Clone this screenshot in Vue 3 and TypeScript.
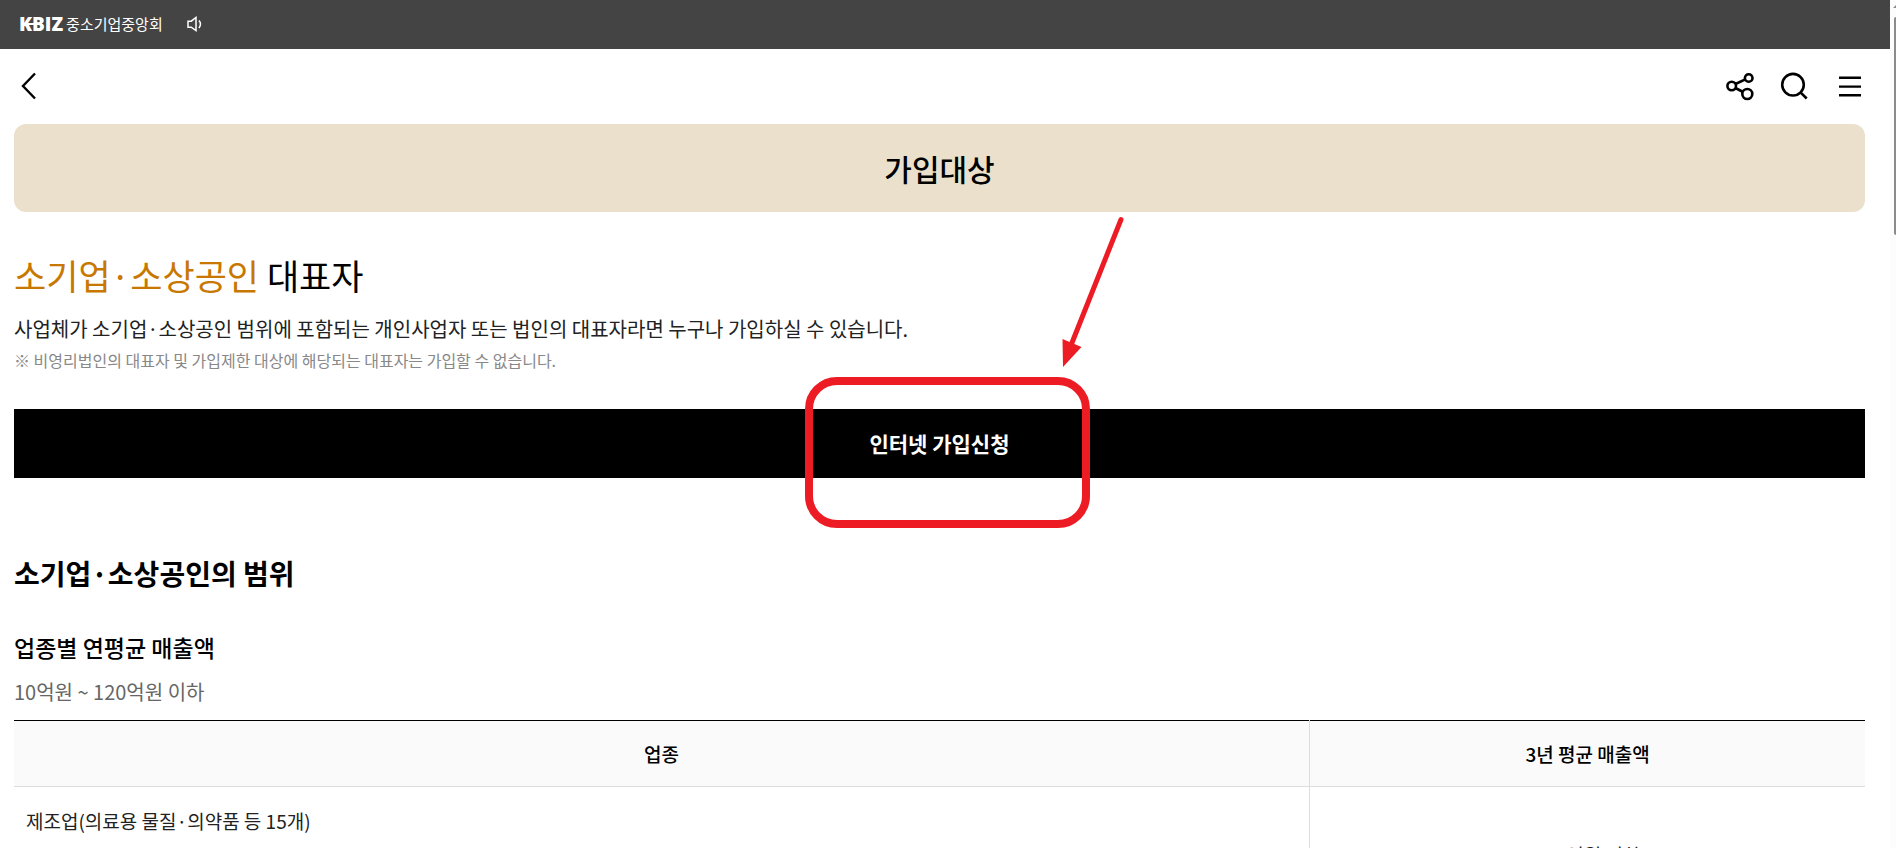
<script setup lang="ts">
interface SalesRow {
  industry: string
  limit: string
}

const columns: string[] = ['업종', '3년 평균 매출액']
const rows: SalesRow[] = [{ industry: '제조업(의료용 물질·의약품 등 15개)', limit: '120억원 이하' }]
</script>

<template>
  <div class="page">
    <div class="content">
      <div class="topbar">
        <a class="brand" href="#">
          <span class="brand-mark">KBIZ</span>
          <span class="brand-name">중소기업중앙회</span>
        </a>
        <button class="icon-button sound" type="button" aria-label="음성 안내">
          <svg width="16" height="16" viewBox="0 0 16 16" fill="none" stroke="#fff" stroke-width="1.500">
            <path d="M1 5.200v6h3.200L9 14.500V1.500L4.200 5.200z" />
            <path d="M12 4.500q3 3.500 0 7.500" />
          </svg>
        </button>
      </div>

      <header class="header">
        <button class="icon-button" type="button" aria-label="뒤로">
          <svg width="32" height="32" viewBox="0 0 32 32" fill="none" stroke="#000" stroke-width="2.400">
            <path d="M23 3.500L11 16l12 12.500" />
          </svg>
        </button>
        <div class="tools">
          <button class="icon-button" type="button" aria-label="공유">
            <svg width="32" height="32" viewBox="0 0 32 32" fill="none" stroke="#000" stroke-width="2.600">
              <circle cx="9.700" cy="16" r="4.300" />
              <circle cx="26.700" cy="8" r="3.800" />
              <circle cx="25.300" cy="24" r="5" />
              <path d="M13.500 14l9.800-4.600M13.500 18l7.500 4" />
            </svg>
          </button>
          <button class="icon-button" type="button" aria-label="검색">
            <svg width="32" height="32" viewBox="0 0 32 32" fill="none" stroke="#000" stroke-width="2.600">
              <circle cx="15" cy="14.700" r="10.800" />
              <path d="M22.500 22.300l6.200 6.200" />
            </svg>
          </button>
          <button class="icon-button" type="button" aria-label="메뉴">
            <svg width="32" height="32" viewBox="0 0 32 32" fill="none" stroke="#000" stroke-width="2.400">
              <path d="M5 7.700h22M5 16.600h22M5 25.300h22" />
            </svg>
          </button>
        </div>
      </header>

      <main class="main">
        <h1 class="banner">가입대상</h1>

        <section class="intro">
          <h2 class="lead"><em>소기업·소상공인</em> 대표자</h2>
          <p class="desc">사업체가 소기업·소상공인 범위에 포함되는 개인사업자 또는 법인의 대표자라면 누구나 가입하실 수 있습니다.</p>
          <p class="note">※ 비영리법인의 대표자 및 가입제한 대상에 해당되는 대표자는 가입할 수 없습니다.</p>
        </section>

        <div class="apply">
          <button class="apply-button" type="button">인터넷 가입신청</button>
          <svg class="callout" width="326" height="316" viewBox="0 0 326 316" aria-hidden="true">
            <rect x="10" y="166" width="277" height="143" rx="28" fill="none" stroke="#ed1c24" stroke-width="8" />
            <path d="M322 4.500L272.500 129" fill="none" stroke="#ed1c24" stroke-width="5" stroke-linecap="round" />
            <path d="M263.500 124L282.500 132L264 152z" fill="#ed1c24" />
          </svg>
        </div>

        <section class="range">
          <h2 class="range-title">소기업·소상공인의 범위</h2>
          <h3 class="range-subtitle">업종별 연평균 매출액</h3>
          <p class="range-value">10억원 ~ 120억원 이하</p>
          <table class="table">
            <colgroup>
              <col class="col-industry" />
              <col />
            </colgroup>
            <thead>
              <tr>
                <th v-for="column in columns" :key="column" scope="col">{{ column }}</th>
              </tr>
            </thead>
            <tbody>
              <template v-for="row in rows" :key="row.industry">
                <tr>
                  <td>{{ row.industry }}</td>
                  <td class="limit" rowspan="2">{{ row.limit }}</td>
                </tr>
                <tr>
                  <td></td>
                </tr>
              </template>
            </tbody>
          </table>
        </section>
      </main>
    </div>
    <div class="scroll-track" aria-hidden="true">
      <svg class="scroll-up" width="3" height="3" viewBox="0 0 3 3"><path d="M0 3L3 0v3z" fill="#8b8b8b" /></svg>
      <div class="scroll-thumb"></div>
    </div>
  </div>
</template>

<style>
body {
  margin: 0;
  background: #fff;
}
</style>

<style scoped>
.page {
  display: flex;
  height: 100vh;
  overflow: hidden;
  color: #000;
  font-family: "Noto Sans CJK KR", "Noto Sans", sans-serif;
}
.content {
  flex: 1;
  min-width: 0;
}
.topbar {
  display: flex;
  align-items: center;
  gap: 24px;
  box-sizing: border-box;
  height: 49px;
  padding: 0 19px 2px;
  background: #444;
}
.brand {
  display: flex;
  align-items: center;
  gap: 3px;
  color: #fff;
  text-decoration: none;
}
.brand-mark {
  position: relative;
  font-family: "Open Sans", "Noto Sans", sans-serif;
  font-size: 19px;
  font-weight: 800;
  line-height: 24px;
}
.brand-mark::after {
  position: absolute;
  top: 11px;
  left: 8px;
  width: 8px;
  height: 2px;
  background: #fff;
  content: "";
}
.brand-name {
  font-size: 15px;
  line-height: 20px;
}
.icon-button {
  display: flex;
  padding: 0;
  border: 0;
  background: none;
}
.header {
  display: flex;
  align-items: center;
  justify-content: space-between;
  height: 74px;
  margin-bottom: 1px;
  padding: 0 24px 0 12px;
}
.tools {
  display: flex;
  gap: 24px;
}
.main {
  padding: 0 25px 0 14px;
}
.banner {
  margin: 0;
  border-radius: 12px;
  background: #ebe0cc;
  font-size: 30px;
  font-weight: 500;
  line-height: 88px;
  text-align: center;
}
.intro {
  padding-top: 35px;
}
.lead {
  margin: 0;
  font-size: 35px;
  font-weight: 400;
  line-height: 56px;
}
.lead em {
  color: #c87800;
  font-style: normal;
}
.desc {
  margin: 10px 0 0;
  color: #222;
  font-size: 20px;
  line-height: 32px;
}
.note {
  margin: 3px 0 0;
  color: #888;
  font-size: 16px;
  line-height: 24px;
}
.apply {
  position: relative;
  margin-top: 37px;
}
.apply-button {
  display: block;
  width: 100%;
  height: 69px;
  padding: 0 0 2px;
  border: 0;
  background: #000;
  color: #fff;
  font: 700 21px "Noto Sans CJK KR", "Noto Sans", sans-serif;
}
.callout {
  position: absolute;
  top: -194px;
  left: 50%;
  margin-left: -141px;
  pointer-events: none;
}
.range {
  padding-top: 71px;
}
.range-title {
  margin: 0;
  font-size: 28px;
  font-weight: 700;
  line-height: 48px;
}
.range-subtitle {
  margin: 32px 0 0;
  font-size: 23px;
  font-weight: 500;
  line-height: 36px;
}
.range-value {
  margin: 11px 0 12px;
  color: #666;
  font-size: 20px;
  line-height: 32px;
}
.table {
  width: 100%;
  border-collapse: collapse;
  table-layout: fixed;
  border-top: 1px solid #000;
}
.col-industry {
  width: 70%;
}
.table th,
.table td {
  height: 43px;
  padding: 12px;
  border-bottom: 1px solid #ddd;
  font-size: 19px;
  line-height: 28px;
}
.table th {
  height: 41px;
  background: #fafafa;
  font-weight: 500;
}
.table td {
  color: #222;
}
.table th + th,
.table td.limit {
  border-left: 1px solid #ddd;
}
.table td.limit {
  text-align: center;
}
.scroll-track {
  width: 6px;
  background: #fcfcfc;
}
.scroll-up {
  display: block;
  margin: 5px 0 9px 3px;
}
.scroll-thumb {
  width: 2px;
  height: 218px;
  margin-left: 4px;
  border-radius: 2px 0 0 2px;
  background: #8b8b8b;
}
</style>
